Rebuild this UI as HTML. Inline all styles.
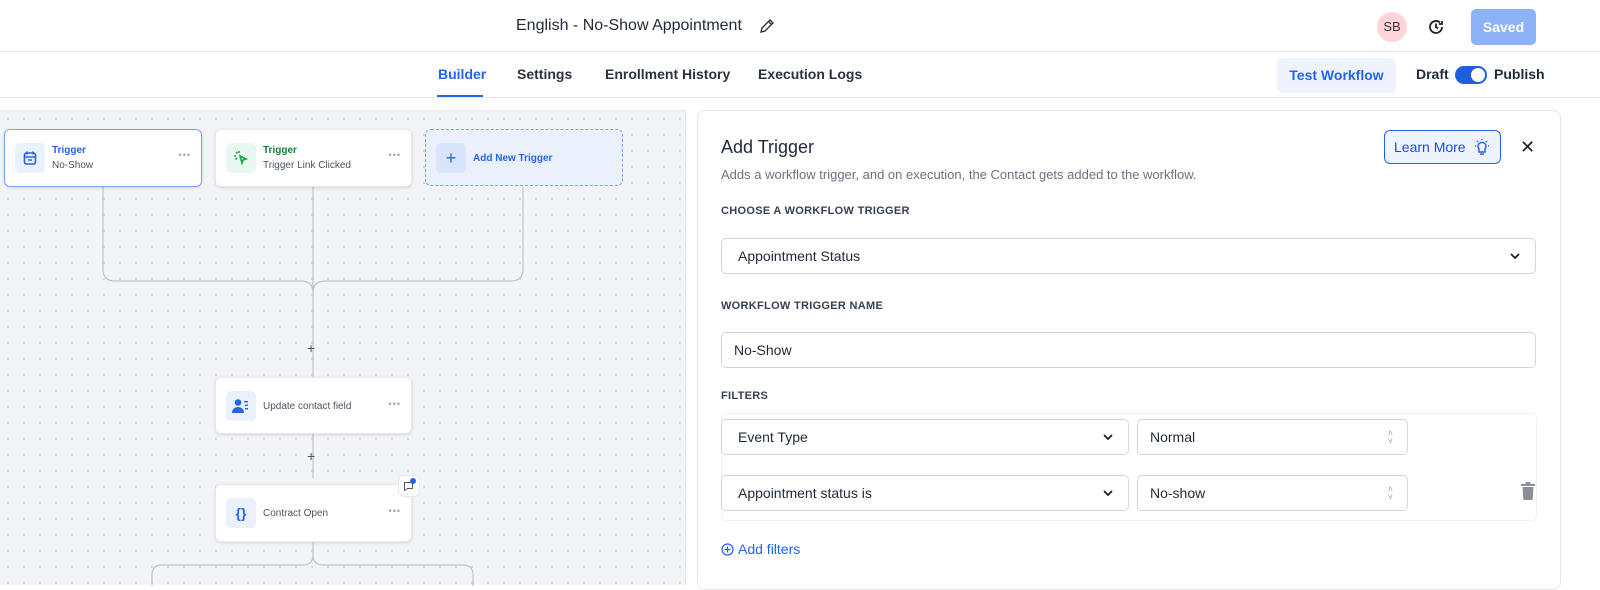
<!DOCTYPE html>
<html><head><meta charset="utf-8"><style>
*{box-sizing:border-box;margin:0;padding:0}
body{width:1600px;height:585px;overflow:hidden;background:#fff;font-family:"Liberation Sans",sans-serif;color:#1f2937;position:relative}
.a{position:absolute}
.tab{position:absolute;top:66px;font-size:14px;font-weight:bold;color:#2b3340}
.canvas{position:absolute;left:0;top:110px;width:686px;height:475px;background-color:#f3f4f7;background-image:radial-gradient(#d3d6dc 1px,transparent 1.2px);background-size:16px 16px;border-top:1px solid #e5e7eb;border-right:1px solid #e5e7eb}
.node{position:absolute;background:#fff;border-radius:6px;box-shadow:0 1px 3px rgba(0,0,0,.12);border:1px solid #e5e7eb}
.ic{position:absolute;left:10px;top:13px;width:30px;height:30px;border-radius:5px;background:#eaf1fd;display:flex;align-items:center;justify-content:center}
.t1{position:absolute;left:47px;top:15px;font-size:10px;font-weight:bold;color:#2563eb}
.t2{position:absolute;left:47px;top:30px;font-size:10px;color:#4b5563}
.dots{position:absolute;right:10px;top:20px;font-size:9px;color:#9ca3af;letter-spacing:1px}
.lbl{position:absolute;left:721px;font-size:11px;font-weight:bold;color:#374151;letter-spacing:.3px}
.sel{position:absolute;border:1px solid #d1d5db;border-radius:5px;background:#fff;font-size:14px;color:#1f2937;padding-left:16px;display:flex;align-items:center}
.chev{position:absolute;right:14px;top:50%;margin-top:-4px}
.ud{position:absolute;right:14px;top:50%;margin-top:-8px;font-size:9px;color:#9ca3af;line-height:8px}
</style></head><body>
<div class="a" style="left:0;top:51px;width:1600px;height:1px;background:#e5e7eb"></div>
<div class="a" style="left:0;top:97px;width:1600px;height:1px;background:#e5e7eb"></div>
<div class="a" style="left:516px;top:17px;font-size:16px;color:#1f2937">English - No-Show Appointment</div>
<svg class="a" style="left:759px;top:18px" width="16" height="16" viewBox="0 0 16 16" fill="none" stroke="#333" stroke-width="1.4"><path d="M2 14l1-4 8-8 3 3-8 8z M9.5 3.5l3 3"/></svg>
<div class="a" style="left:1377px;top:12px;width:30px;height:30px;border-radius:50%;background:#fdd5d8;font-size:13px;color:#333;text-align:center;line-height:30px">SB</div>
<svg class="a" style="left:1427px;top:18px" width="18" height="18" viewBox="0 0 18 18" fill="none" stroke="#222" stroke-width="1.8"><path d="M15 9a6 6 0 1 1-2-4.5M15 3v3h-3M9 5.5V9l2 1.5"/></svg>
<div class="a" style="left:1471px;top:9px;width:65px;height:36px;border-radius:5px;background:#8db2f8;color:#fff;font-size:14px;font-weight:bold;text-align:center;line-height:36px">Saved</div>
<div class="tab" style="left:438px;color:#2563eb">Builder</div>
<div class="a" style="left:437px;top:95px;width:46px;height:2px;background:#2563eb"></div>
<div class="tab" style="left:517px">Settings</div>
<div class="tab" style="left:605px">Enrollment History</div>
<div class="tab" style="left:758px">Execution Logs</div>
<div class="a" style="left:1277px;top:58px;width:119px;height:35px;border-radius:6px;background:#eef3fd;color:#2563eb;font-size:14px;font-weight:bold;text-align:center;line-height:35px">Test Workflow</div>
<div class="a" style="left:1416px;top:66px;font-size:14px;font-weight:bold;color:#1f2937">Draft</div>
<div class="a" style="left:1455px;top:66px;width:32px;height:18px;border-radius:9px;background:#1d5fe0"><div style="position:absolute;right:2px;top:2px;width:14px;height:14px;border-radius:50%;background:#fff"></div></div>
<div class="a" style="left:1494px;top:66px;font-size:14px;font-weight:bold;color:#1f2937">Publish</div>

<div class="canvas">
<svg class="a" style="left:0;top:0" width="686" height="475" fill="none" stroke="#bfc3c9" stroke-width="1.2">
<path d="M103 76V158q0 12 12 12H301q12 0 12 12M523 76V158q0 12-12 12H325q-12 0-12 12M313 76V266M313 322V367M313 430V444q0 10-10 10H162q-10 0-10 10V480M313 444q0 10 10 10H463q10 0 10 10V480"/>
</svg>
<div class="a" style="left:307px;top:229px;font-size:14px;color:#555">+</div>
<div class="a" style="left:307px;top:337px;font-size:14px;color:#555">+</div>
<div class="node" style="left:4px;top:18px;width:198px;height:58px;border:1.5px solid #7aa2f7">
<div class="ic"><svg width="16" height="16" viewBox="0 0 16 16" fill="none" stroke="#2563eb" stroke-width="1.6"><rect x="2.5" y="3" width="11" height="11" rx="2"/><path d="M5 1.5v3M11 1.5v3M2.5 7h11M6 10h4"/></svg></div>
<div class="t1">Trigger</div><div class="t2">No-Show</div><div class="dots">•••</div></div>
<div class="node" style="left:215px;top:18px;width:197px;height:58px">
<div class="ic" style="background:#e8f7ef"><svg width="16" height="16" viewBox="0 0 16 16" fill="none" stroke="#16a34a" stroke-width="1.6"><path d="M7 6l6 3-3 1-1 3z M3 2l1.5 1.5M1 6h2M6 1v2M2.5 9.5L4 8"/></svg></div>
<div class="t1" style="color:#15803d">Trigger</div><div class="t2">Trigger Link Clicked</div><div class="dots">•••</div></div>
<div class="a" style="left:425px;top:18px;width:198px;height:57px;border:1px dashed #7aa2f7;border-radius:6px;background:#eaf1fd">
<div class="ic" style="background:#d8e5fc;color:#2563eb;font-size:18px">+</div>
<div class="a" style="left:47px;top:23px;font-size:10px;font-weight:bold;color:#2563eb">Add New Trigger</div></div>
<div class="node" style="left:215px;top:266px;width:197px;height:57px">
<div class="ic"><svg width="18" height="16" viewBox="0 0 18 16" fill="#2563eb"><circle cx="6" cy="4.5" r="3.3"/><path d="M0 15c0-4 3-6 6-6s6 2 6 6z"/><rect x="12" y="3" width="4" height="1.4"/><rect x="13" y="6.5" width="3" height="1.4"/><rect x="13" y="10" width="3" height="1.4"/></svg></div>
<div class="t2" style="top:23px">Update contact field</div><div class="dots" style="top:21px">•••</div></div>
<div class="node" style="left:215px;top:373px;width:197px;height:58px">
<div class="ic" style="color:#2563eb;font-size:14px;font-weight:bold">{}</div>
<div class="t2" style="top:23px">Contract Open</div><div class="dots" style="top:21px">•••</div></div>
<div class="a" style="left:398px;top:364px;width:22px;height:22px;border-radius:6px;background:#fff;border:1px solid #e5e7eb"><svg style="position:absolute;left:4px;top:4px" width="12" height="12" viewBox="0 0 12 12" fill="none" stroke="#555" stroke-width="1"><path d="M1.5 2.5h8v6h-5l-3 2z"/></svg><div style="position:absolute;right:3px;top:2px;width:6px;height:6px;border-radius:50%;background:#2563eb"></div></div>
</div>

<div class="a" style="left:697px;top:110px;width:864px;height:480px;border:1px solid #e5e7eb;border-radius:8px;background:#fff"></div>
<div class="a" style="left:721px;top:137px;font-size:18px;color:#1f2937">Add Trigger</div>
<div class="a" style="left:721px;top:167px;font-size:13px;color:#6b7280">Adds a workflow trigger, and on execution, the Contact gets added to the workflow.</div>
<div class="a" style="left:1384px;top:130px;width:117px;height:34px;border:1px solid #2563eb;border-radius:6px;background:#eef3fd;color:#1d4ed8;font-size:14px;line-height:32px;padding-left:9px">Learn More</div>
<svg class="a" style="left:1472px;top:137px" width="20" height="20" viewBox="0 0 20 20" fill="none" stroke="#2563eb" stroke-width="1.5"><path d="M7 12a4 4 0 1 1 6 0v3H7z M8 17h4M10 2v1M3 9h1M16 9h1M5 4l1 1M15 4l-1 1"/></svg>
<div class="a" style="left:1520px;top:137px;font-size:18px;color:#222">✕</div>
<div class="lbl" style="top:205px">CHOOSE A WORKFLOW TRIGGER</div>
<div class="sel" style="left:721px;top:238px;width:815px;height:36px">Appointment Status<svg class="chev" width="12" height="8" viewBox="0 0 12 8" fill="none" stroke="#222" stroke-width="1.8"><path d="M2 2l4 4 4-4"/></svg></div>
<div class="lbl" style="top:300px">WORKFLOW TRIGGER NAME</div>
<div class="sel" style="left:721px;top:332px;width:815px;height:36px;padding-left:12px">No-Show</div>
<div class="lbl" style="top:390px">FILTERS</div>
<div class="a" style="left:721px;top:413px;width:816px;height:108px;border:1px solid #f0f1f3;border-radius:5px"></div>
<div class="sel" style="left:721px;top:419px;width:408px;height:36px">Event Type<svg class="chev" width="12" height="8" viewBox="0 0 12 8" fill="none" stroke="#222" stroke-width="1.8"><path d="M2 2l4 4 4-4"/></svg></div>
<div class="sel" style="left:1137px;top:419px;width:271px;height:36px;padding-left:12px">Normal<div class="ud">˄<br>˅</div></div>
<div class="sel" style="left:721px;top:475px;width:408px;height:36px">Appointment status is<svg class="chev" width="12" height="8" viewBox="0 0 12 8" fill="none" stroke="#222" stroke-width="1.8"><path d="M2 2l4 4 4-4"/></svg></div>
<div class="sel" style="left:1137px;top:475px;width:271px;height:36px;padding-left:12px">No-show<div class="ud">˄<br>˅</div></div>
<svg class="a" style="left:1520px;top:482px" width="16" height="18" viewBox="0 0 16 18" fill="#8a8f98"><rect x="1" y="2" width="14" height="2"/><rect x="5.5" y="0" width="5" height="2"/><path d="M2.5 5h11l-1 13h-9z"/></svg>
<svg class="a" style="left:721px;top:543px" width="13" height="13" viewBox="0 0 13 13" fill="none" stroke="#2563eb" stroke-width="1.2"><circle cx="6.5" cy="6.5" r="5.5"/><path d="M6.5 3.5v6M3.5 6.5h6"/></svg>
<div class="a" style="left:738px;top:541px;font-size:14px;color:#2563eb">Add filters</div>
</body></html>
